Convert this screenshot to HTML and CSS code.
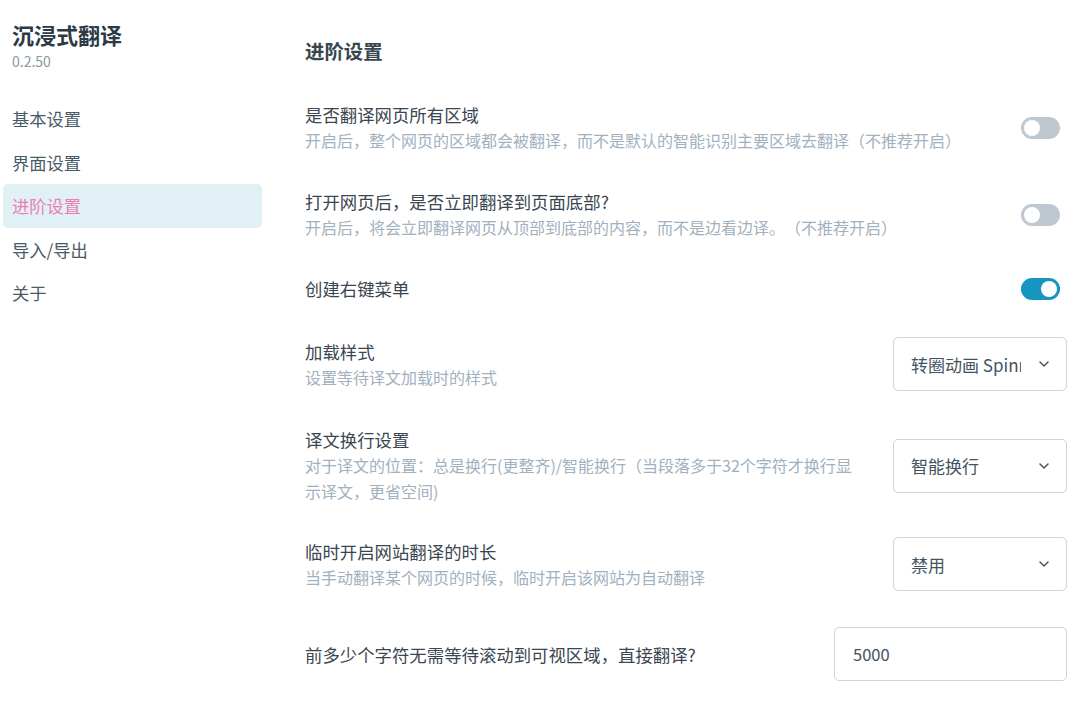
FILE: index.html
```html
<!DOCTYPE html>
<html lang="zh-CN">
<head>
<meta charset="utf-8">
<title>沉浸式翻译 - 进阶设置</title>
<link rel="stylesheet" href="styles.css">
</head>
<body>
<div class="app">
  <aside class="sidebar">
    <div class="brand">
      <div class="brand-title">沉浸式翻译</div>
      <div class="brand-ver">0.2.50</div>
    </div>
    <nav class="nav">
      <a class="nav-item">基本设置</a>
      <a class="nav-item">界面设置</a>
      <a class="nav-item active">进阶设置</a>
      <a class="nav-item">导入/导出</a>
      <a class="nav-item">关于</a>
    </nav>
  </aside>
  <main class="main">
    <h2 class="section-title">进阶设置</h2>
    <div class="rows">
      <div class="row">
        <div class="text">
          <div class="label">是否翻译网页所有区域</div>
          <div class="desc">开启后，整个网页的区域都会被翻译，而不是默认的智能识别主要区域去翻译（不推荐开启）</div>
        </div>
        <span class="toggle"><span class="knob"></span></span>
      </div>
      <div class="row">
        <div class="text">
          <div class="label">打开网页后，是否立即翻译到页面底部?</div>
          <div class="desc">开启后，将会立即翻译网页从顶部到底部的内容，而不是边看边译。（不推荐开启）</div>
        </div>
        <span class="toggle"><span class="knob"></span></span>
      </div>
      <div class="row">
        <div class="text">
          <div class="label">创建右键菜单</div>
        </div>
        <span class="toggle on"><span class="knob"></span></span>
      </div>
      <div class="row">
        <div class="text">
          <div class="label">加载样式</div>
          <div class="desc">设置等待译文加载时的样式</div>
        </div>
        <div class="select"><span class="select-val">转圈动画 Spinner</span><svg class="chev" viewBox="0 0 10 6" width="10" height="6"><path d="M1 1l4 4 4-4" fill="none" stroke="#415462" stroke-width="1.5" stroke-linecap="round" stroke-linejoin="round"/></svg></div>
      </div>
      <div class="row">
        <div class="text narrow">
          <div class="label">译文换行设置</div>
          <div class="desc">对于译文的位置：总是换行(更整齐)/智能换行（当段落多于32个字符才换行显示译文，更省空间)</div>
        </div>
        <div class="select"><span class="select-val">智能换行</span><svg class="chev" viewBox="0 0 10 6" width="10" height="6"><path d="M1 1l4 4 4-4" fill="none" stroke="#415462" stroke-width="1.5" stroke-linecap="round" stroke-linejoin="round"/></svg></div>
      </div>
      <div class="row tight">
        <div class="text">
          <div class="label">临时开启网站翻译的时长</div>
          <div class="desc">当手动翻译某个网页的时候，临时开启该网站为自动翻译</div>
        </div>
        <div class="select"><span class="select-val">禁用</span><svg class="chev" viewBox="0 0 10 6" width="10" height="6"><path d="M1 1l4 4 4-4" fill="none" stroke="#415462" stroke-width="1.5" stroke-linecap="round" stroke-linejoin="round"/></svg></div>
      </div>
      <div class="row">
        <div class="text">
          <div class="label">前多少个字符无需等待滚动到可视区域，直接翻译?</div>
        </div>
        <div class="input">5000</div>
      </div>
    </div>
  </main>
</div>
</body>
</html>
```
FILE: styles.css
```css
* { box-sizing: border-box; }
html, body { margin: 0; padding: 0; background: #fff; }
body {
  font-family: "Noto Sans CJK SC", "Noto Sans", sans-serif;
  color: #415462;
  text-spacing-trim: space-all;
}
.app { display: flex; align-items: flex-start; }
.sidebar { width: 262px; flex: none; padding-left: 3px; }
.brand { padding: 20px 0 0 9px; }
.brand-title { font-size: 22px; line-height: 28px; font-weight: 700; color: #2c3a47; }
.brand-ver { font-size: 14px; line-height: 20px; margin-top: 3px; color: #8797a4; }
.nav { display: flex; flex-direction: column; margin-top: 26px; }
.nav-item {
  display: block; height: 43.5px; line-height: 43.5px; padding-left: 9px;
  font-size: 17.3px; color: #4a5b68; border-radius: 5px;
}
.nav-item.active { background: #e0f0f5; color: #ec7eb0; }
.main { flex: 1; padding: 37px 13px 0 43px; }
.section-title { margin: 0; font-size: 19.4px; line-height: 28px; font-weight: 700; color: #37474f; }
.rows { display: flex; flex-direction: column; gap: 36px; margin-top: 37px; }
.row { display: flex; align-items: center; justify-content: space-between; gap: 20px; }
.row.tight { margin-top: -3px; }
.text { min-width: 0; }
.text.narrow { max-width: 562px; }
.label { font-size: 17.4px; line-height: 25px; color: #3b4650; }
.desc { font-size: 16px; line-height: 26px; color: #a1b1c0; }
.toggle {
  flex: none; width: 39px; height: 22px; border-radius: 11px; background: #bfc8d1;
  display: flex; align-items: center; padding: 0 3px; margin-right: 7px;
}
.toggle .knob { width: 16px; height: 16px; border-radius: 50%; background: #fff; }
.toggle.on { background: #1595c0; justify-content: flex-end; }
.select {
  flex: none; width: 174px; height: 54px; border: 1px solid #cdd5dc; border-radius: 5px;
  display: flex; align-items: center; padding: 0 17px; gap: 18px;
}
.select-val { flex: 1; white-space: nowrap; overflow: hidden; font-size: 17px; color: #415462; }
.chev { flex: none; }
.input {
  flex: none; width: 233px; height: 54px; border: 1px solid #cdd5dc; border-radius: 5px;
  display: flex; align-items: center; padding-left: 18px; font-size: 16.5px; color: #415462;
}
```
